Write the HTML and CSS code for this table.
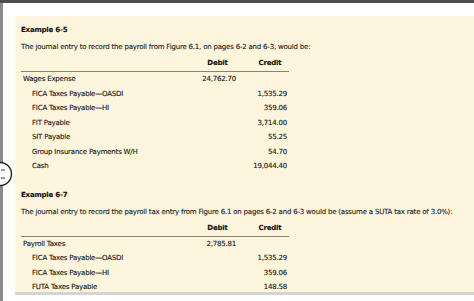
FILE: index.html
```html
<!DOCTYPE html>
<html>
<head>
<meta charset="utf-8">
<link rel="stylesheet" href="styles.css">
</head>
<body>
<div class="topbar"></div>
<div class="frame">
  <div class="sidebar"></div>
  <div class="content">
    <div class="panel">
      <div class="example-title">Example 6-5</div>
      <p class="intro">The journal entry to record the payroll from Figure 6.1, on pages 6-2 and 6-3, would be:</p>
      <div class="journal">
        <div class="jhead"></div><div class="jhead">Debit</div><div class="jhead cr">Credit</div>
        <div class="acct">Wages Expense</div><div class="amt">24,762.70</div><div class="amt cr"></div>
        <div class="acct indent">FICA Taxes Payable—OASDI</div><div class="amt"></div><div class="amt cr">1,535.29</div>
        <div class="acct indent">FICA Taxes Payable—HI</div><div class="amt"></div><div class="amt cr">359.06</div>
        <div class="acct indent">FIT Payable</div><div class="amt"></div><div class="amt cr">3,714.00</div>
        <div class="acct indent">SIT Payable</div><div class="amt"></div><div class="amt cr">55.25</div>
        <div class="acct indent">Group Insurance Payments W/H</div><div class="amt"></div><div class="amt cr">54.70</div>
        <div class="acct indent">Cash</div><div class="amt"></div><div class="amt cr">19,044.40</div>
      </div>
      <div class="example-title second">Example 6-7</div>
      <p class="intro">The journal entry to record the payroll tax entry from Figure 6.1 on pages 6-2 and 6-3 would be (assume a SUTA tax rate of 3.0%):</p>
      <div class="journal">
        <div class="jhead"></div><div class="jhead">Debit</div><div class="jhead cr">Credit</div>
        <div class="acct">Payroll Taxes</div><div class="amt">2,785.81</div><div class="amt cr"></div>
        <div class="acct indent">FICA Taxes Payable—OASDI</div><div class="amt"></div><div class="amt cr">1,535.29</div>
        <div class="acct indent">FICA Taxes Payable—HI</div><div class="amt"></div><div class="amt cr">359.06</div>
        <div class="acct indent">FUTA Taxes Payable</div><div class="amt"></div><div class="amt cr">148.58</div>
      </div>
    </div>
    <div class="bottombar"></div>
  </div>
</div>
<svg class="navcircle" width="26" height="26" viewBox="0 0 26 26">
  <circle cx="13" cy="13" r="11.5" fill="#fff" stroke="#222" stroke-width="1.4"/>
  <path d="M14 9 L18 9 M14 17 L18 17 M12 11 L12 15" stroke="#333" stroke-width="1.2" fill="none"/>
</svg>
</body>
</html>
```

FILE: styles.css
```css
html, body {
  margin: 0;
  padding: 0;
  background: #ffffff;
  width: 474px;
  height: 301px;
  overflow: hidden;
  font-family: "DejaVu Sans", Verdana, sans-serif;
  color: #111;
}
.topbar {
  height: 3px;
  background: #4d4d4d;
}
.frame {
  display: flex;
  height: 298px;
}
.sidebar {
  width: 3px;
  background: #8a8a8a;
  flex: none;
}
.content {
  flex: 1;
  padding: 13px 0 0 12px;
}
.panel {
  background: #fdf5dc;
  height: 276px;
  padding: 9px 0 0 6px;
  box-sizing: border-box;
  font-size: 7px;
  letter-spacing: -0.2px;
  -webkit-text-stroke: 0.12px currentColor;
}
.example-title {
  font-weight: bold;
  line-height: 11px;
  color: #111;
}
.example-title.second {
  margin-top: 16px;
}
.intro {
  margin: 6px 0 5px 0;
  line-height: 11px;
  color: #1c1c1c;
  white-space: nowrap;
}
.journal {
  display: grid;
  width: 268px;
  grid-template-columns: 176px 41px 51px;
}
.jhead {
  font-weight: bold;
  line-height: 11px;
  padding-bottom: 2px;
  border-bottom: 1px solid #8c8272;
  text-align: center;
  color: #111;
}
.jhead.cr { padding-left: 13px; }
.acct {
  height: 14.5px;
  line-height: 15px;
  padding-left: 2px;
  color: #161616;
}
.acct.indent { padding-left: 11px; }
.amt {
  height: 14.5px;
  line-height: 15px;
  text-align: right;
  padding-right: 2px;
  color: #161616;
}
.bottombar {
  height: 3px;
  background: #d4d4d4;
}
.navcircle {
  position: absolute;
  left: -13px;
  top: 161px;
}
```
